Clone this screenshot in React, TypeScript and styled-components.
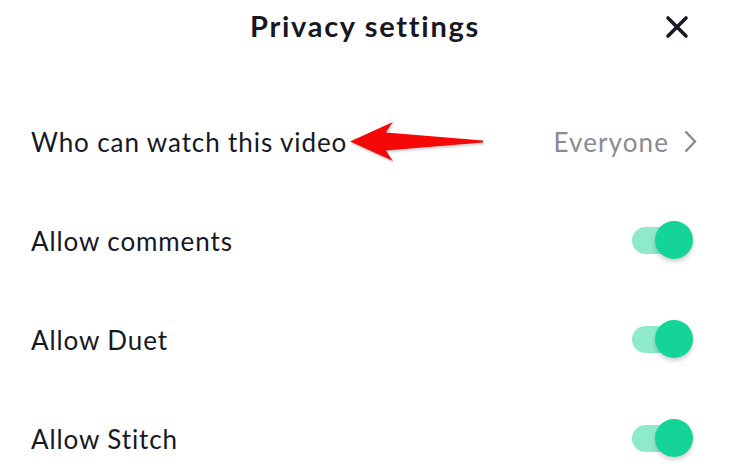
import React, { useState } from "react";
import styled, { createGlobalStyle } from "styled-components";

const GlobalStyle = createGlobalStyle`
    html, body {
        margin: 0;
        padding: 0;
        background: #ffffff;
    }

    body {
        font-family: "Lato", "Open Sans", Arial, sans-serif;
        color: #161823;
    }
`;

const Screen = styled.div`
    width: 730px;
    height: 466px;
    overflow: hidden;
    background: #ffffff;
`;

const Header = styled.header`
    position: relative;
    display: flex;
    align-items: center;
    justify-content: center;
    height: 51px;
`;

const Title = styled.h1`
    margin: 0;
    font-size: 29px;
    font-weight: 700;
    color: #161823;
    letter-spacing: 1.7px;
`;

// close button sits over the header bar, right side
const CloseButton = styled.button`
    position: absolute;
    right: 41px;
    top: 15px;
    width: 24px;
    height: 24px;
    padding: 0;
    border: none;
    background: transparent;
    cursor: pointer;
    display: flex;
    align-items: center;
    justify-content: center;
`;

const List = styled.div`
    display: flex;
    flex-direction: column;
    padding-top: 41px;
`;

const Row = styled.div`
    display: flex;
    align-items: center;
    height: 99px;
    padding: 0 33px 0 31px;
`;

const Label = styled.span`
    font-size: 26px;
    font-weight: 400;
    color: #161823;
    letter-spacing: 0.9px;
`;

const Arrow = styled.svg`
    margin-left: 2px;
    flex-shrink: 0;
    filter: drop-shadow(1px 2px 1px rgba(0, 0, 0, 0.18));
`;

const Spacer = styled.div`
    flex: 1;
`;

const Value = styled.span`
    font-size: 26px;
    color: #8a8b91;
    letter-spacing: 1.1px;
    margin-right: 15px;
`;

const Track = styled.button<{ $on: boolean }>`
    position: relative;
    width: 48px;
    height: 27px;
    margin-right: 17px;
    padding: 0;
    border: none;
    border-radius: 14px;
    background: ${({ $on }) => ($on ? "#8eeacb" : "#d8d8da")};
    cursor: pointer;
`;

const Knob = styled.span<{ $on: boolean }>`
    position: absolute;
    top: -6px;
    left: ${({ $on }) => ($on ? "23px" : "-10px")};
    width: 38px;
    height: 38px;
    border-radius: 50%;
    background: ${({ $on }) => ($on ? "#14d497" : "#ffffff")};
    box-shadow: 0 3px 4px rgba(0, 0, 0, 0.18);
`;

const Toggle: React.FC<{ on: boolean; onClick: () => void }> = ({ on, onClick }) => (
    <Track $on={on} onClick={onClick}>
        <Knob $on={on} />
    </Track>
);

const App: React.FC = () => {
    const [toggles, setToggles] = useState({ comments: true, duet: true, stitch: true });

    const flip = (key: keyof typeof toggles) =>
        setToggles((t) => ({ ...t, [key]: !t[key] }));

    const rows: { key: keyof typeof toggles; label: string }[] = [
        { key: "comments", label: "Allow comments" },
        { key: "duet", label: "Allow Duet" },
        { key: "stitch", label: "Allow Stitch" },
    ];

    return (
        <Screen>
            <GlobalStyle />
            <Header>
                <Title>Privacy settings</Title>
                <CloseButton aria-label="Close">
                    <svg width="24" height="24" viewBox="0 0 24 24">
                        <path d="M3 3 L21 21 M21 3 L3 21" stroke="#161823" strokeWidth="3.6" strokeLinecap="round" />
                    </svg>
                </CloseButton>
            </Header>

            <List>
                <Row>
                    <Label>Who can watch this video</Label>
                    <Arrow width="136" height="42" viewBox="0 0 136 42">
                        <path
                            d="M1 20.5 C14 15 28 8 44 1 C41 5 39 8 37 11.5 L134 19.5 L134 21.5 L37 29.5 C39 33 41 36 44 40 C28 33 14 26 1 20.5 Z"
                            fill="#f40808"
                        />
                    </Arrow>
                    <Spacer />
                    <Value>Everyone</Value>
                    <svg width="13" height="23" viewBox="0 0 13 23">
                        <path d="M1.5 1.5 L11 11.5 L1.5 21.5" fill="none" stroke="#8a8b91" strokeWidth="2.4" />
                    </svg>
                </Row>

                {rows.map((r) => (
                    <Row key={r.key}>
                        <Label>{r.label}</Label>
                        <Spacer />
                        <Toggle on={toggles[r.key]} onClick={() => flip(r.key)} />
                    </Row>
                ))}
            </List>
        </Screen>
    );
};

export default App;
